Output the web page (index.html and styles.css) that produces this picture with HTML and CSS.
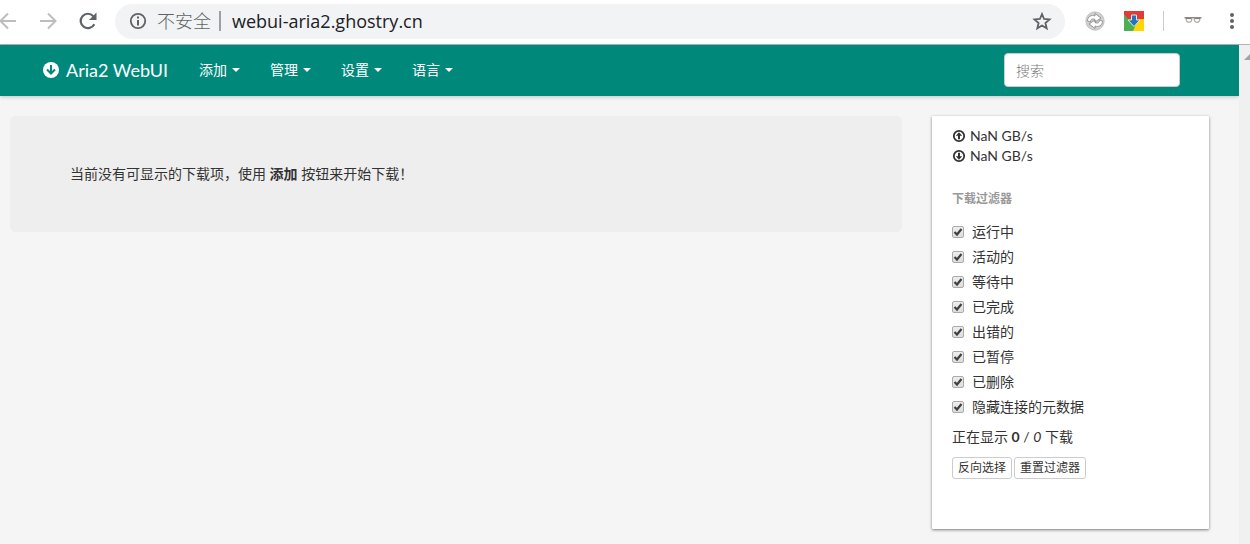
FILE: index.html
```
<!DOCTYPE html>
<html lang="zh-CN">
<head>
  <meta charset="UTF-8">
  <meta name="viewport" content="width=device-width, initial-scale=1.0">
  <title>Aria2 WebUI</title>
  <link rel="stylesheet" href="styles.css">
</head>
<body>

  <!-- browser bar -->
  <div class="toolbar">
    <div class="history">
      <button class="tool" aria-label="Back" disabled>
        <svg width="20" height="20" viewBox="0 0 20 20" fill="none" stroke="#bdbdbd" stroke-width="2"><path d="M18 10H3M10 2.500L2.500 10l7.500 7.500"/></svg>
      </button>
      <button class="tool" aria-label="Forward" disabled>
        <svg width="20" height="20" viewBox="0 0 20 20" fill="none" stroke="#bdbdbd" stroke-width="2"><path d="M2 10h15M10 2.500l7.500 7.500-7.500 7.500"/></svg>
      </button>
      <button class="tool" aria-label="Reload">
        <svg width="20" height="20" viewBox="0 0 20 20"><path d="M16.300 13.200A7.200 7.200 0 1 1 15.300 5.200" fill="none" stroke="#5f6368" stroke-width="2.200"/><path d="M18.500 1.500v7.500H11z" fill="#5f6368"/></svg>
      </button>
    </div>
    <div class="address">
      <svg width="18" height="18" viewBox="0 0 18 18"><circle cx="9" cy="9" r="7.200" fill="none" stroke="#5f6368" stroke-width="1.800"/><path d="M8 4.500h2v2H8zM8 8h2v5.500H8z" fill="#5f6368"/></svg>
      <span class="insecure">不安全</span>
      <input class="url" type="text" aria-label="Address" value="webui-aria2.ghostry.cn">
      <button class="tool" aria-label="Bookmark">
        <svg width="20" height="20" viewBox="0 0 20 20"><path d="M10 3l2.100 5 5.400.4-4.100 3.600 1.300 5.300L10 14.500l-4.700 2.800L6.600 12 2.500 8.400 7.900 8z" fill="none" stroke="#5f6368" stroke-width="1.800"/></svg>
      </button>
    </div>
    <div class="extensions">
      <button class="tool" aria-label="Sync">
        <svg width="20" height="20" viewBox="0 0 20 20"><circle cx="10" cy="10" r="9.200" fill="#cfcfcf" stroke="#bbb" stroke-width=".8"/><path d="M2.500 10C2.500 5.500 6.500 3.500 10 5V2.500l6 4.500-6 4V8.500C7 7.200 5.500 8.500 5.500 11zM17.500 10c0 4.500-4 6.500-7.500 5v2.500L4 13l6-4v2.500c3 1.300 4.500 0 4.500-2.500z" fill="#fff" stroke="#8d8d8d" stroke-width=".9"/></svg>
      </button>
      <button class="tool" aria-label="Downloads">
        <svg width="20" height="20" viewBox="0 0 20 20"><path d="M0 0h20v20H0z" fill="#4caf50"/><path d="M20 6v14H9l5-11z" fill="#ffd600"/><path d="M0 0h20v8H4L0 3z" fill="#e53935"/><path d="M7.500 4h5v5H16l-6 6.500L4 9h3.500z" fill="#2874b8" stroke="#d9e8f2"/></svg>
      </button>
      <span class="divider"></span>
      <button class="tool" aria-label="Glasses">
        <svg width="20" height="20" viewBox="0 0 20 20" fill="#f8f8f8" stroke="#8a8278" stroke-width=".9"><path d="M3 7.500h5.300q.7 0 .4 1.800-.4 1.900-2.200 1.900H5.300q-1.700 0-2-1.900zM11.700 7.500H17l-.3 1.800q-.3 1.900-2 1.900h-1.200q-1.800 0-2.200-1.900-.3-1.800.4-1.800z"/><path d="M1.500 6.800h17" fill="none" stroke="#4e4943"/></svg>
      </button>
      <button class="tool" aria-label="Menu">
        <svg width="20" height="20" viewBox="0 0 20 20" fill="#5f6368"><circle cx="10" cy="4" r="2"/><circle cx="10" cy="10" r="2"/><circle cx="10" cy="16" r="2"/></svg>
      </button>
    </div>
  </div>

  <div class="viewport">
    <div class="page">
      <nav class="navbar">
        <a class="brand" href="#">
          <svg width="16" height="16" viewBox="0 0 16 16"><circle cx="8" cy="8" r="8" fill="#fff"/><path d="M8 3v8M4 7.500l4 4 4-4" fill="none" stroke="#00897b" stroke-width="2"/></svg>
          Aria2 WebUI
        </a>
        <button class="dropdown">添加 <span class="caret"></span></button>
        <button class="dropdown">管理 <span class="caret"></span></button>
        <button class="dropdown">设置 <span class="caret"></span></button>
        <button class="dropdown">语言 <span class="caret"></span></button>
        <input class="search" type="text" placeholder="搜索" aria-label="搜索">
      </nav>

      <div class="content">
        <main class="empty">当前没有可显示的下载项，使用 <strong>添加</strong> 按钮来开始下载！</main>

        <aside class="sidebar">
          <div class="speed">
            <svg width="14" height="14" viewBox="0 0 14 14"><circle cx="7" cy="7" r="5.200" fill="none" stroke="#333" stroke-width="1.800"/><path d="M7 3.200l3.200 3.500H8v3.600H6V6.700H3.800z" fill="#333"/></svg>
            NaN GB/s
          </div>
          <div class="speed">
            <svg width="14" height="14" viewBox="0 0 14 14"><circle cx="7" cy="7" r="5.200" fill="none" stroke="#333" stroke-width="1.800"/><path d="M7 10.800L3.800 7.300H6V3.700h2v3.600h2.200z" fill="#333"/></svg>
            NaN GB/s
          </div>

          <h2 class="filter-title">下载过滤器</h2>
          <div class="filters">
            <label><input type="checkbox" checked>运行中</label>
            <label><input type="checkbox" checked>活动的</label>
            <label><input type="checkbox" checked>等待中</label>
            <label><input type="checkbox" checked>已完成</label>
            <label><input type="checkbox" checked>出错的</label>
            <label><input type="checkbox" checked>已暂停</label>
            <label><input type="checkbox" checked>已删除</label>
            <label><input type="checkbox" checked>隐藏连接的元数据</label>
          </div>
          <p class="showing">正在显示 <strong>0</strong> / <em>0</em> 下载</p>
          <div class="actions">
            <button class="btn">反向选择</button>
            <button class="btn">重置过滤器</button>
          </div>
        </aside>
      </div>
    </div>
    <div class="scrollbar"><span class="arrow"></span></div>
  </div>

</body>
</html>
```
FILE: styles.css
```
* {
  box-sizing: border-box;
}

body {
  margin: 0;
  min-height: 100vh;
  display: flex;
  flex-direction: column;
  font-family: Lato, "Noto Sans CJK SC", sans-serif;
  font-size: 14px;
  line-height: 20px;
  color: #333;
  background-color: #f5f5f5;
  overflow: hidden;
}

button,
input {
  font-family: inherit;
}

svg {
  display: block;
  flex-shrink: 0;
}

/* browser bar */
.toolbar {
  display: flex;
  align-items: center;
  height: 45px;
  padding-bottom: 2px;
  background-color: #fff;
  border-bottom: 1px solid #b4b4b6;
}

.history {
  display: flex;
  gap: 20px;
  width: 117px;
  margin-left: -2px;
}

.tool {
  padding: 0;
  border: none;
  background: none;
}

.address {
  flex: 1;
  display: flex;
  align-items: center;
  height: 35px;
  padding: 0 13px 0 14px;
  border-radius: 18px;
  background-color: #f1f3f4;
  font-family: "Open Sans", "Noto Sans CJK SC", sans-serif;
  font-size: 18px;
}

.insecure {
  margin-left: 10px;
  padding-right: 8px;
  border-right: 2px solid #9aa0a6;
  font-weight: 300;
  color: #5f6368;
}

.url {
  flex: 1;
  min-width: 0;
  margin-left: 11px;
  padding: 0;
  border: none;
  outline: none;
  background: none;
  font-size: 18px;
  color: #202124;
}

.extensions {
  display: flex;
  align-items: center;
  gap: 19px;
  margin-left: 20px;
  margin-right: 8px;
}

.divider {
  width: 1px;
  height: 20px;
  background-color: #ccc;
}

/* page */
.viewport {
  flex: 1;
  display: flex;
}

.page {
  flex: 1;
}

.scrollbar {
  width: 11px;
  padding: 9px 0 0 5px;
  background-color: #f0f0f0;
  overflow: hidden;
}

.arrow {
  display: block;
  width: 12px;
  border: 6px solid transparent;
  border-top: none;
  border-bottom-color: #a3a3a3;
}

.navbar {
  display: flex;
  align-items: center;
  height: 51px;
  padding: 0 59px 1px 43px;
  background-color: #00897b;
  box-shadow: 0 1px 4px rgba(0, 0, 0, 0.2);
}

.brand {
  display: flex;
  align-items: center;
  gap: 7px;
  margin-right: 16px;
  font-size: 18px;
  color: #fff;
  text-decoration: none;
}

.dropdown {
  display: flex;
  align-items: center;
  gap: 5px;
  padding: 0 15px;
  border: none;
  background: none;
  font-size: 14px;
  line-height: 20px;
  color: #fff;
}

.caret {
  border: 4px solid transparent;
  border-top-color: #fff;
  border-bottom: none;
}

.search {
  width: 176px;
  height: 34px;
  margin-left: auto;
  padding: 6px 11px;
  border: 1px solid #ccc;
  border-radius: 4px;
  background-color: #fff;
  font-size: 14px;
  font-weight: 300;
}

.search::placeholder {
  color: #777;
}

.content {
  display: flex;
  align-items: flex-start;
  gap: 30px;
  padding: 20px 30px 15px 10px;
}

.empty {
  flex: 1;
  padding: 48px 60px;
  border-radius: 6px;
  background-color: #eee;
}

.sidebar {
  width: 277px;
  padding: 10px 20px 50px;
  background-color: #fff;
  border-radius: 1px;
  box-shadow: 0 1px 3px rgba(0, 0, 0, 0.5);
}

.speed {
  display: flex;
  align-items: center;
  gap: 4px;
}

.filter-title {
  margin: 23px 0 13px;
  font-size: 12px;
  line-height: 20px;
  font-weight: 700;
  color: #999;
}

.filters {
  display: flex;
  flex-direction: column;
  gap: 5px;
}

.filters label {
  display: flex;
  align-items: center;
  gap: 8px;
}

.filters input {
  appearance: none;
  width: 12px;
  height: 12px;
  margin: 0;
  border: 1px solid #aaa;
  border-radius: 2px;
  background: url("data:image/svg+xml,%3Csvg xmlns='http://www.w3.org/2000/svg' viewBox='0 0 10 10'%3E%3Cpath d='M1.500 5L4 7.500 8.500 2' fill='none' stroke='%23404040' stroke-width='2.200'/%3E%3C/svg%3E"), linear-gradient(#eee, #ddd);
}

.showing {
  margin: 10px 0;
}

.showing strong {
  font-weight: 700;
}

.actions {
  display: flex;
  gap: 2px;
}

.btn {
  padding: 1px 5px;
  border: 1px solid #ccc;
  border-radius: 3px;
  background-color: #fff;
  font-size: 12px;
  line-height: 18px;
  color: #333;
}
```
